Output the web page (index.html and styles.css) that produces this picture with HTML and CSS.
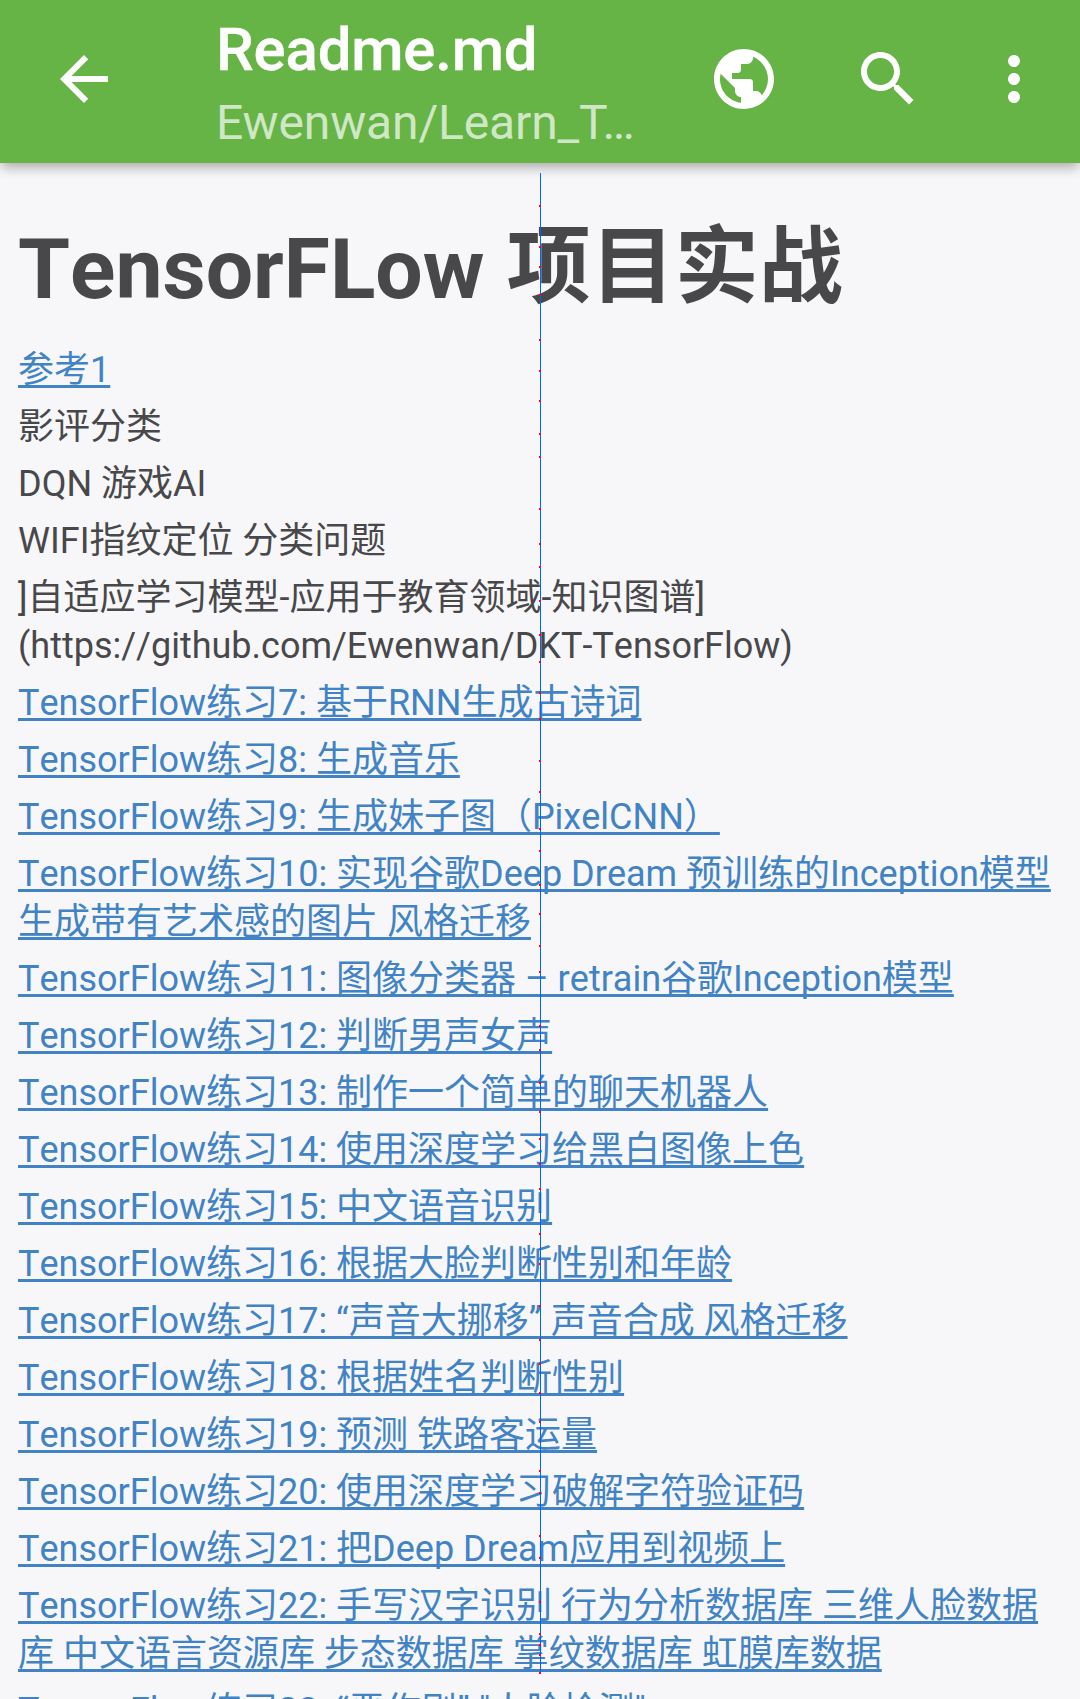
FILE: index.html
```html
<!DOCTYPE html>
<html lang="zh-CN">
<head>
<meta charset="utf-8">
<title>Readme.md</title>
<link rel="stylesheet" href="styles.css">
</head>
<body>
<header class="bar">
  <svg class="icon back" viewBox="0 0 24 24"><path d="M20 11H7.83l5.59-5.59L12 4l-8 8 8 8 1.41-1.41L7.83 13H20v-2z"/></svg>
  <div class="titles">
    <div class="title">Readme.md</div>
    <div class="subtitle">Ewenwan/Learn_T…</div>
  </div>
  <div class="actions">
    <svg class="icon" viewBox="0 0 24 24"><path d="M12 2C6.48 2 2 6.48 2 12s4.48 10 10 10 10-4.48 10-10S17.52 2 12 2zm-1 17.93c-3.95-.49-7-3.85-7-7.93 0-.62.08-1.21.21-1.79L9 15v1c0 1.1.9 2 2 2v1.93zm6.9-2.54c-.26-.81-1-1.39-1.9-1.39h-1v-3c0-.55-.45-1-1-1H8v-2h2c.55 0 1-.45 1-1V7h2c1.1 0 2-.9 2-2v-.41c2.93 1.19 5 4.06 5 7.41 0 2.08-.8 3.97-2.1 5.39z"/></svg>
    <svg class="icon" viewBox="0 0 24 24"><path d="M15.5 14h-.79l-.28-.27C15.41 12.59 16 11.11 16 9.5 16 5.91 13.09 3 9.5 3S3 5.91 3 9.5 5.91 16 9.5 16c1.61 0 3.09-.59 4.23-1.57l.27.28v.79l5 4.99L20.49 19l-4.99-5zm-6 0C7.01 14 5 11.99 5 9.5S7.01 5 9.5 5 14 7.01 14 9.5 11.99 14 9.5 14z"/></svg>
    <svg class="icon more" viewBox="0 0 24 24"><path d="M12 8c1.1 0 2-.9 2-2s-.9-2-2-2-2 .9-2 2 .9 2 2 2zm0 2c-1.1 0-2 .9-2 2s.9 2 2 2 2-.9 2-2-.9-2-2-2zm0 6c-1.1 0-2 .9-2 2s.9 2 2 2 2-.9 2-2-.9-2-2-2z"/></svg>
  </div>
</header>
<main class="doc">
  <h1>TensorFLow <span class="cjk">项目实战</span></h1>
  <p><a href="#">参考1</a></p>
  <p>影评分类</p>
  <p>DQN 游戏AI</p>
  <p>WIFI指纹定位 分类问题</p>
  <p>]自适应学习模型-应用于教育领域-知识图谱]<br>(https://github.com/Ewenwan/DKT-TensorFlow)</p>
  <p><a href="#">TensorFlow练习7: 基于RNN生成古诗词</a></p>
  <p><a href="#">TensorFlow练习8: 生成音乐</a></p>
  <p><a href="#">TensorFlow练习9: 生成妹子图（PixelCNN）</a></p>
  <p><a href="#">TensorFlow练习10: 实现谷歌Deep Dream 预训练的Inception模型<br>生成带有艺术感的图片 风格迁移</a></p>
  <p><a href="#">TensorFlow练习11: 图像分类器 – retrain谷歌Inception模型</a></p>
  <p><a href="#">TensorFlow练习12: 判断男声女声</a></p>
  <p><a href="#">TensorFlow练习13: 制作一个简单的聊天机器人</a></p>
  <p><a href="#">TensorFlow练习14: 使用深度学习给黑白图像上色</a></p>
  <p><a href="#">TensorFlow练习15: 中文语音识别</a></p>
  <p><a href="#">TensorFlow练习16: 根据大脸判断性别和年龄</a></p>
  <p><a href="#">TensorFlow练习17: “声音大挪移” 声音合成 风格迁移</a></p>
  <p><a href="#">TensorFlow练习18: 根据姓名判断性别</a></p>
  <p><a href="#">TensorFlow练习19: 预测 铁路客运量</a></p>
  <p><a href="#">TensorFlow练习20: 使用深度学习破解字符验证码</a></p>
  <p><a href="#">TensorFlow练习21: 把Deep Dream应用到视频上</a></p>
  <p><a href="#">TensorFlow练习22: 手写汉字识别 行为分析数据库 三维人脸数据<br>库 中文语言资源库 步态数据库 掌纹数据库 虹膜库数据</a></p>
  <p><a href="#">TensorFlow练习23: “恶作剧” "人脸检测"</a></p>
</main>
<!-- vertical trace with its sample points -->
<svg class="trace" width="4" height="1699" shape-rendering="crispEdges">
  <path fill="#0062ff" d="M2 173h1v1500H2z"/>
  <path stroke="#ff0014" stroke-width="2" d="M1 206h2M1 247h2M1 267h2M1 295h2M1 340h2M1 371h2M1 401h2M1 434h2M1 457h2M1 509h2M1 544h2M1 567h2M1 601h2M1 635h2M1 662h2M1 693h2M1 719h2M1 761h2M1 792h2M1 829h2M1 851h2M1 885h2M1 914h2M1 946h2M1 972h2M1 1026h2M1 1050h2M1 1083h2M1 1112h2M1 1139h2M1 1164h2M1 1189h2M1 1234h2M1 1264h2M1 1306h2M1 1340h2M1 1364h2M1 1393h2M1 1422h2M1 1471h2M1 1493h2M1 1536h2M1 1558h2M1 1602h2M1 1634h2M1 1645h2M1 1655h2M1 1673h2"/>
</svg>
</body>
</html>
```
FILE: styles.css
```css
* { box-sizing: border-box; }
body {
  margin: 0;
  height: 1699px;
  overflow: hidden;
  position: relative;
  background: #f7f7f9;
  color: #48484b;
  font-family: Roboto, "Noto Sans CJK SC", sans-serif;
}
.bar {
  display: flex;
  align-items: center;
  height: 163px;
  padding: 0 30px 0 48px;
  background: #66b346;
  color: #fff;
  box-shadow: 0 5px 12px -1px rgba(0, 0, 0, .33);
}
.icon { width: 72px; height: 72px; fill: #fff; flex: none; margin-top: -5px; }
.titles {
  align-self: flex-start;
  width: 426px;
  margin-left: 96px;
  padding-top: 15px;
}
.title {
  font-size: 60px;
  font-weight: 500;
  line-height: 70px;
  letter-spacing: -0.2px;
  -webkit-text-stroke: .4px #fff;
}
.subtitle {
  margin-top: 9px;
  font-size: 48px;
  line-height: 58px;
  letter-spacing: -0.15px;
  color: rgba(255, 255, 255, .7);
  white-space: nowrap;
}
.actions { display: flex; gap: 72px; margin-left: 66px; }
.more { margin-left: -18px; }
.doc { padding: 0 18px; font-size: 36px; line-height: 48px; font-kerning: none; }
h1 { margin: 0; padding: 57px 0 26px; height: 183px; font-size: 84px; line-height: 100px; font-weight: 700; }
.cjk { margin-left: 1.5px; line-height: 1; vertical-align: 2px; }
p { margin: 0 0 9px; white-space: nowrap; }
a {
  color: #4183c4;
  text-decoration: underline;
  text-decoration-thickness: 3px;
  text-underline-offset: 3px;
  text-decoration-skip-ink: none;
}
.trace { position: absolute; left: 538px; top: 0; }
```
